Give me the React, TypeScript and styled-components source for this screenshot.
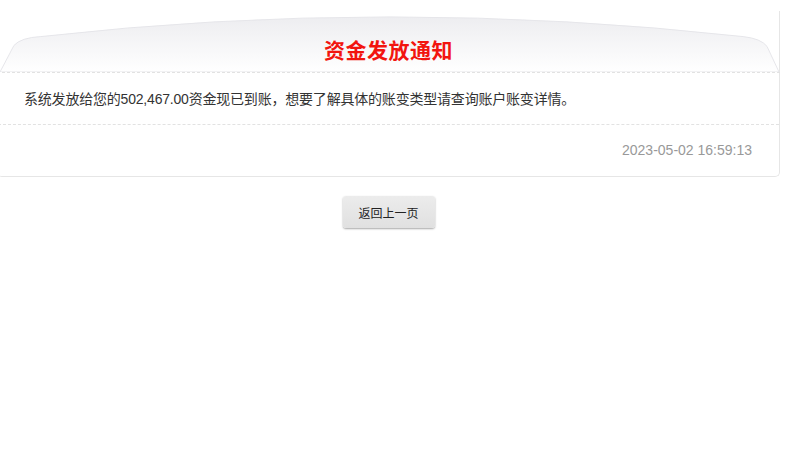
import React from "react";
import styled, { createGlobalStyle } from "styled-components";

const GlobalStyle = createGlobalStyle`
  html, body {
    margin: 0;
    padding: 0;
    background: #fff;
    overflow: hidden;
  }
  body {
    font-family: "Liberation Sans", "Noto Sans CJK SC", sans-serif;
  }
`;

function App() {
  return (
    <Page>
      <GlobalStyle />
      <Card>
        <Header>
          <HeaderShape viewBox="0 0 785 62" preserveAspectRatio="none">
            <defs>
              <linearGradient id="hdr" x1="0" y1="0" x2="0" y2="1">
                <stop offset="0" stopColor="#ededf0" />
                <stop offset="1" stopColor="#ffffff" />
              </linearGradient>
            </defs>
            <path
              d="M3 62 L17 35 Q24 27 44 26 Q392 -14 748 26 Q766 28 772 36 L784 62 Z"
              fill="url(#hdr)"
              stroke="#e6e6ea"
              strokeWidth="1"
            />
          </HeaderShape>
          <Title>资金发放通知</Title>
        </Header>
        <Message>系统发放给您的502,467.00资金现已到账，想要了解具体的账变类型请查询账户账变详情。</Message>
        <DateRow>2023-05-02 16:59:13</DateRow>
      </Card>
      <Actions>
        <BackButton>返回上一页</BackButton>
      </Actions>
    </Page>
  );
}

export default App;

const Page = styled.div`
  width: 800px;
  height: 473px;
  padding-top: 11px;
  box-sizing: border-box;
`;

const Card = styled.div`
  width: 783px;
  margin-left: -3px;
  box-sizing: border-box;
  border: 1px solid #e6e6e6;
  border-top: none;
  border-radius: 0 0 5px 5px;
`;

const Header = styled.div`
  position: relative;
  height: 61px;
  display: flex;
  align-items: center;
  justify-content: center;
  border-bottom: 1px dashed #e2e2e2;
  margin: 0 -1px;
`;

const HeaderShape = styled.svg`
  position: absolute;
  left: 0;
  top: 0;
  width: 100%;
  height: 100%;
`;

const Title = styled.h1`
  position: relative;
  margin: 14px 0 0;
  font-family: "Noto Sans CJK SC", sans-serif;
  font-size: 21px;
  font-weight: 700;
  color: #f2150f;
  letter-spacing: 0.5px;
`;

const Message = styled.div`
  padding: 16px 26px 15px;
  font-size: 14px;
  line-height: 20px;
  letter-spacing: -0.2px;
  color: #333;
  border-bottom: 1px dashed #e2e2e2;
`;

const DateRow = styled.div`
  display: flex;
  justify-content: flex-end;
  padding: 15px 27px 16px;
  font-size: 14px;
  line-height: 20px;
  color: #999;
`;

const Actions = styled.div`
  display: flex;
  justify-content: center;
  width: 783px;
  margin-left: -3px;
  margin-top: 19px;
`;

const BackButton = styled.button`
  width: 92px;
  height: 32px;
  border: none;
  border-radius: 3px;
  background: linear-gradient(#ececec, #e0e0e0);
  box-shadow: 0 1px 2px rgba(0, 0, 0, 0.35);
  font-family: "Noto Sans CJK SC", sans-serif;
  font-size: 12px;
  color: #222;
  cursor: pointer;
`;
